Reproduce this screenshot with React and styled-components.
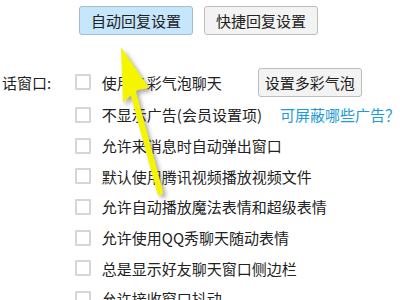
import React from "react";
import styled, { createGlobalStyle } from "styled-components";

const Global = createGlobalStyle`
  html, body { margin: 0; padding: 0; background: #fff; }
  body {
    font-family: "Noto Sans CJK SC", "Microsoft YaHei", sans-serif;
    color: #222;
    font-size: 15px;
    overflow: hidden;
  }
`;

const Page = styled.div`
  position: relative;
  width: 400px;
  height: 300px;
  overflow: hidden;
`;

const TopBar = styled.div`
  display: flex;
  gap: 11px;
  padding: 6px 0 0 79px;
`;

const Button = styled.button`
  height: 29px;
  padding: 0 ${(p) => (p.$tight ? 6 : 11)}px;
  box-sizing: border-box;
  font-family: inherit;
  font-size: 15px;
  color: #222;
  line-height: 1;
  border-radius: 3px;
  border: 1px solid ${(p) => (p.$active ? "#a6bccb" : "#bdbdbd")};
  background: ${(p) => (p.$active ? "#c5e6fb" : "#f3f3f3")};
  white-space: nowrap;
`;

const Section = styled.div`
  display: flex;
  margin-top: 29.5px;
`;

const Label = styled.div`
  width: 77px;
  padding-left: 2px;
  height: 35px;
  line-height: 35px;
  white-space: nowrap;
`;

const List = styled.div`
  display: flex;
  flex-direction: column;
`;

const Row = styled.div`
  display: flex;
  align-items: center;
  height: ${(p) => (p.$first ? "35px" : "30.7px")};
  white-space: nowrap;
`;

const Box = styled.span`
  width: 16px;
  height: 16px;
  box-sizing: border-box;
  border: 2px solid #d6d6d6;
  border-radius: 1px;
  margin-right: 11px;
  flex: none;
`;

const Text = styled.span`
  line-height: 1;
`;

const Side = styled.span`
  margin-left: ${(p) => p.$gap}px;
`;

const Link = styled.span`
  color: #1c9ad9;
  line-height: 1;
  margin-left: 18px;
`;

const Arrow = styled.svg`
  position: absolute;
  left: 0;
  top: 0;
  pointer-events: none;
`;

const items = [
  "不显示广告(会员设置项)",
  "允许来消息时自动弹出窗口",
  "默认使用腾讯视频播放视频文件",
  "允许自动播放魔法表情和超级表情",
  "允许使用QQ秀聊天随动表情",
  "总是显示好友聊天窗口侧边栏",
  "允许接收窗口抖动",
];

export default function App() {
  return (
    <Page>
      <Global />
      <TopBar>
        <Button $active>自动回复设置</Button>
        <Button>快捷回复设置</Button>
      </TopBar>
      <Section>
        <Label>话窗口:</Label>
        <List>
          <Row $first>
            <Box />
            <Text>使用多彩气泡聊天</Text>
            <Side $gap={36}>
              <Button $tight>设置多彩气泡</Button>
            </Side>
          </Row>
          {items.map((t, i) => (
            <Row key={t}>
              <Box />
              <Text>{t}</Text>
              {i === 0 && <Link>可屏蔽哪些广告？</Link>}
            </Row>
          ))}
        </List>
      </Section>
      <Arrow width="400" height="300" viewBox="0 0 400 300">
        <defs>
          <filter id="sh" x="-50%" y="-50%" width="200%" height="200%">
            <feGaussianBlur stdDeviation="2" />
          </filter>
        </defs>
        <g transform="translate(3,3)" filter="url(#sh)" opacity="0.55">
          <polygon points="121,47 149,88 138,90 131,95 123,103" fill="#666" />
          <line x1="133" y1="93" x2="160" y2="192" stroke="#666" strokeWidth="6" strokeLinecap="round" />
        </g>
        <polygon points="121,47 149,88 138,90 131,95 123,103" fill="#f5f500" />
        <line x1="133" y1="92" x2="160" y2="192" stroke="#f5f500" strokeWidth="6" strokeLinecap="round" />
      </Arrow>
    </Page>
  );
}
